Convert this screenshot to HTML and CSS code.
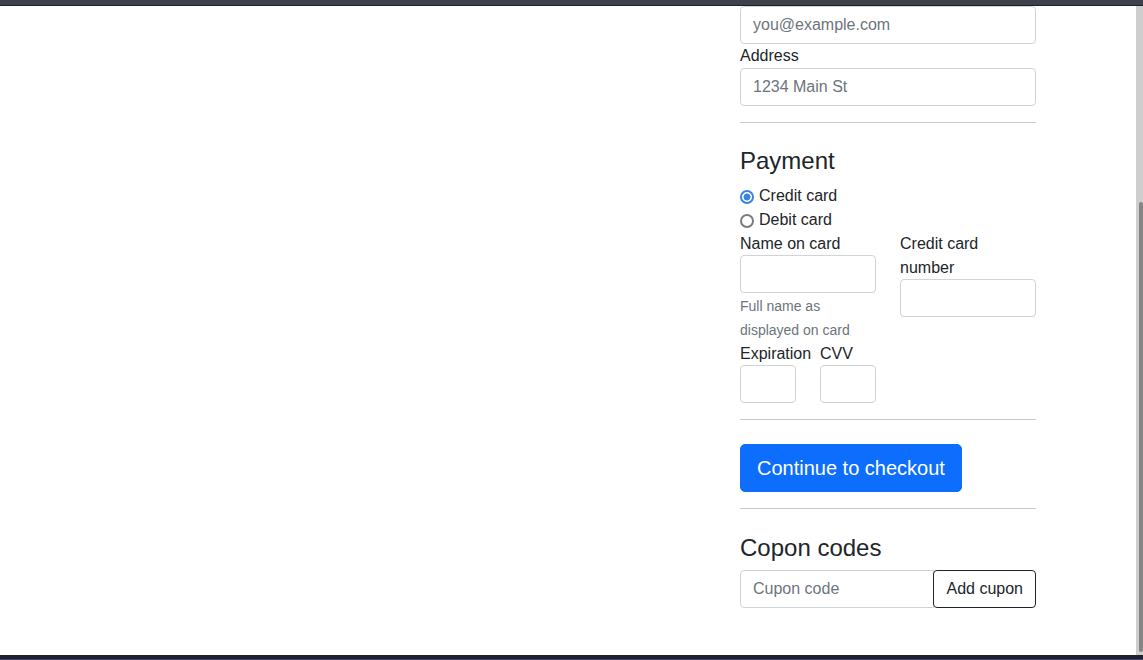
FILE: index.html
```html
<!DOCTYPE html>
<html lang="en">
<head>
<meta charset="utf-8">
<title>Checkout</title>
<link rel="stylesheet" href="styles.css">
</head>
<body>
<div class="window">
  <div class="topbar"></div>
  <div class="viewport">
    <div class="page">
      <div class="side"></div>
      <form class="checkout">
        <input class="field" type="email" placeholder="you@example.com">
        <label class="label">Address</label>
        <input class="field" type="text" placeholder="1234 Main St">

        <hr class="divider">

        <h4 class="heading">Payment</h4>
        <div class="options">
          <label class="option nudge"><input class="radio" type="radio" name="pay" checked><span>Credit card</span></label>
          <label class="option nudge"><input class="radio" type="radio" name="pay"><span>Debit card</span></label>
        </div>

        <div class="card-row">
          <div class="col">
            <label class="label nudge">Name on card</label>
            <input class="field" type="text">
            <div class="help nudge"><small>Full name as displayed on card</small></div>
          </div>
          <div class="col">
            <label class="label nudge">Credit card number</label>
            <input class="field" type="text">
          </div>
        </div>

        <div class="exp-row">
          <div class="col">
            <label class="label nudge nowrap">Expiration</label>
            <input class="field" type="text">
          </div>
          <div class="col">
            <label class="label nudge nowrap">CVV</label>
            <input class="field" type="text">
          </div>
        </div>

        <hr class="divider">

        <button class="btn-primary" type="button">Continue to checkout</button>

        <hr class="divider">

        <h4 class="heading nudge">Copon codes</h4>
        <div class="input-group">
          <input class="field group-field" type="text" placeholder="Cupon code">
          <button class="btn-outline" type="button">Add cupon</button>
        </div>
      </form>
    </div>
    <div class="scrollbar"><div class="thumb"></div></div>
  </div>
  <div class="bottombar"></div>
</div>
</body>
</html>
```

FILE: styles.css
```css
* { box-sizing: border-box; }

html, body {
  margin: 0;
  padding: 0;
  height: 100%;
}

body {
  font-family: "Liberation Sans", Arial, sans-serif;
  font-size: 16px;
  line-height: 1.5;
  color: #212529;
  background: #ffffff;
}

.window {
  display: flex;
  flex-direction: column;
  height: 660px;
  overflow: hidden;
}

.topbar {
  height: 6px;
  flex: none;
  background: #3e4149;
  border-bottom: 1px solid #1f2125;
}

.viewport {
  flex: 1;
  display: flex;
  overflow: hidden;
  min-height: 0;
}

.page {
  flex: 1;
  display: grid;
  grid-template-columns: 740px 296px 1fr;
  align-content: start;
}

.checkout {
  grid-column: 2;
  display: flex;
  flex-direction: column;
  margin: 0;
}

.scrollbar {
  width: 7px;
  flex: none;
  background: #cecece;
  padding-top: 196px;
  padding-left: 3px;
}

.thumb {
  height: 450px;
  background: #858585;
  border-radius: 2px;
}

.bottombar {
  height: 5px;
  flex: none;
  background: #1f2229;
  border-bottom: 1px solid #34418a;
}

.label {
  display: block;
  line-height: 24px;
}

.nowrap {
  white-space: nowrap;
}

/* text sits a pixel lower within its line box */
.nudge {
  padding-top: 1px;
  margin-bottom: -1px;
}

.field {
  display: block;
  width: 100%;
  height: 38px;
  padding: 6px 12px;
  font-family: inherit;
  font-size: 16px;
  line-height: 24px;
  color: #212529;
  background: #fff;
  border: 1px solid #ced4da;
  border-radius: 4px;
  outline: none;
}

.field::placeholder {
  color: #6c757d;
  opacity: 1;
}

.divider {
  width: 100%;
  border: 0;
  border-top: 1px solid #c8c9ca;
  margin: 16px 0 24px;
  height: 0;
}

.heading {
  font-size: 24px;
  font-weight: 400;
  line-height: 1.2;
  margin-top: 0;
  margin-bottom: 8px;
}

.heading.nudge {
  margin-bottom: 7px;
}

.options {
  display: flex;
  flex-direction: column;
  margin-top: -0.8px;
}

.option {
  display: flex;
  align-items: center;
  line-height: 24px;
}

.radio {
  appearance: none;
  -webkit-appearance: none;
  width: 14px;
  height: 14px;
  margin: 1px 5px 0 0;
  flex: none;
  border: 2px solid #7b7b7b;
  border-radius: 50%;
  background: #fff;
}

.radio:checked {
  border-color: #3b82e3;
  background: radial-gradient(circle, #3b82e3 0 3.2px, #fff 3.8px);
}

.card-row {
  display: grid;
  grid-template-columns: repeat(2, minmax(0, 1fr));
  column-gap: 24px;
}

.exp-row {
  display: grid;
  grid-template-columns: repeat(4, minmax(0, 1fr));
  column-gap: 24px;
}

.help {
  color: #6c757d;
  line-height: 24px;
}

.help small {
  font-size: 14px;
}

.btn-primary {
  align-self: flex-start;
  font-family: inherit;
  font-size: 20px;
  line-height: 30px;
  padding: 8px 16px;
  color: #fff;
  background: #0d6efd;
  border: 1px solid #0d6efd;
  border-radius: 5px;
}

.input-group {
  display: flex;
}

.group-field {
  flex: 1;
  min-width: 0;
  border-radius: 4px 0 0 4px;
}

.btn-outline {
  flex: none;
  margin-left: -1px;
  font-family: inherit;
  font-size: 16px;
  line-height: 24px;
  padding: 6px 12px;
  color: #212529;
  background: #fff;
  border: 1px solid #212529;
  border-radius: 4px;
}
```
